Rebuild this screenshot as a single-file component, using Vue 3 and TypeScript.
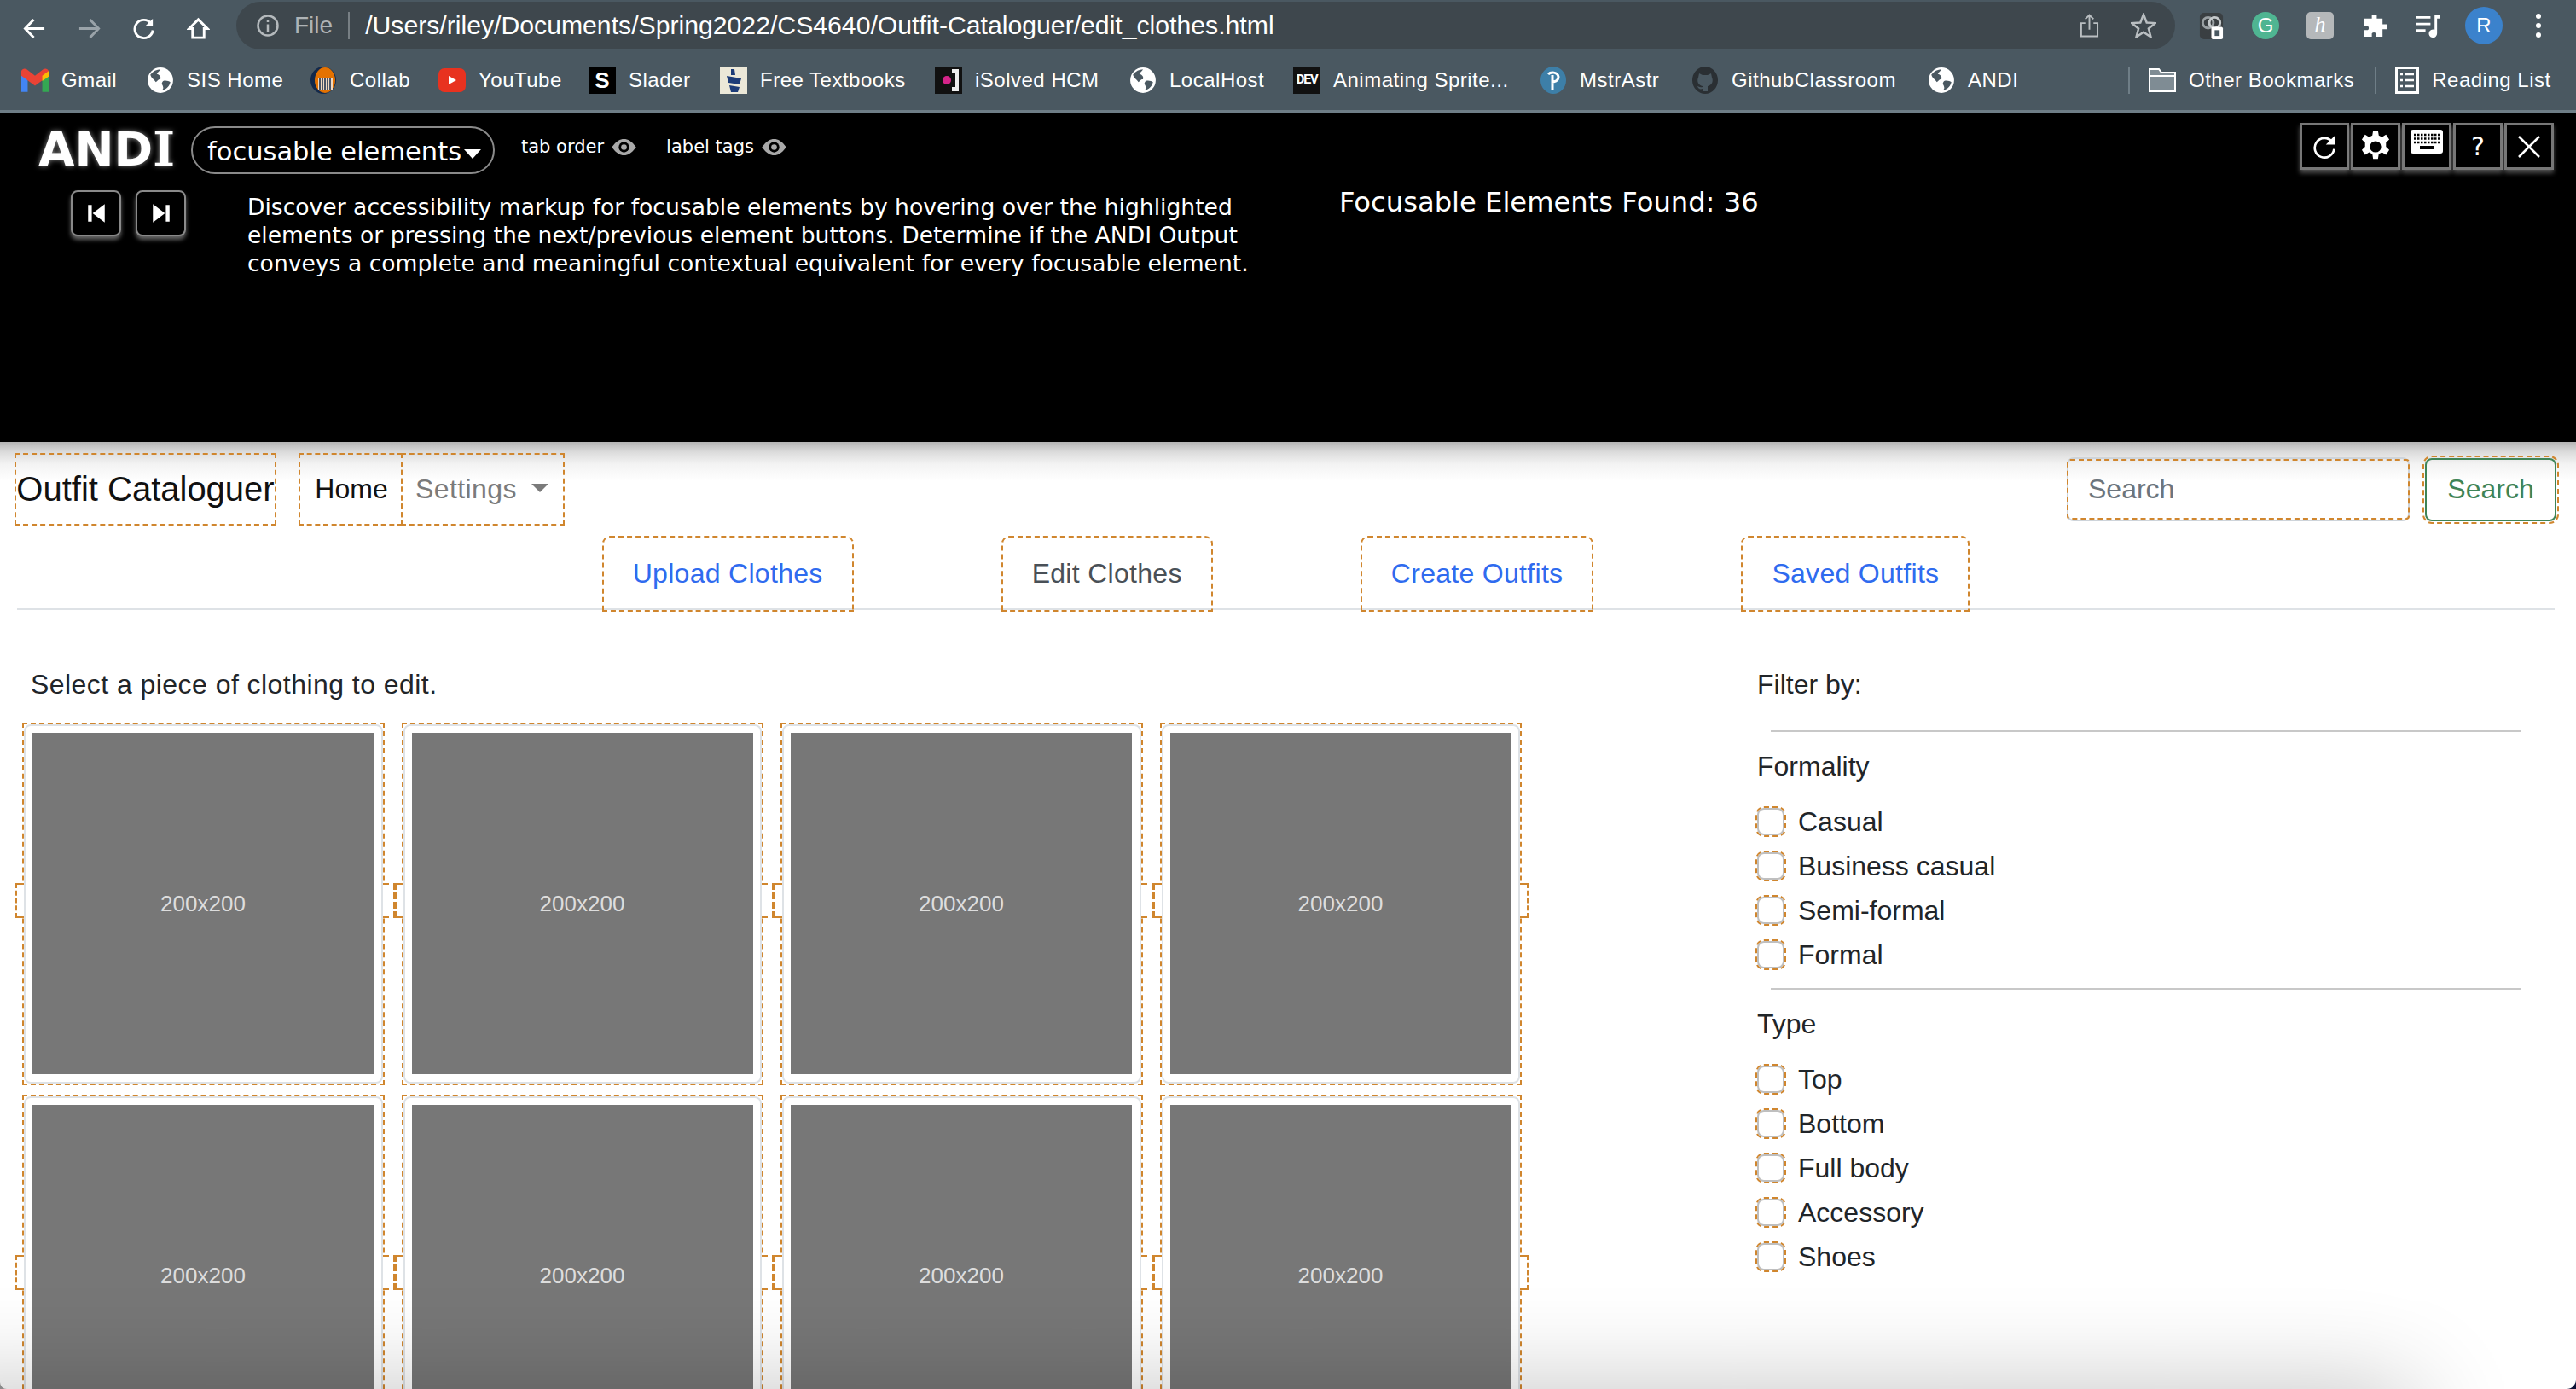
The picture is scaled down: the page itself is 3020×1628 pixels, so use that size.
<script setup lang="ts">
interface Bookmark {
  label: string
  icon: string
  left: number
}

const bookmarks: Bookmark[] = [
  { label: 'Gmail', icon: 'gmail', left: 25 },
  { label: 'SIS Home', icon: 'globe', left: 172 },
  { label: 'Collab', icon: 'collab', left: 363 },
  { label: 'YouTube', icon: 'youtube', left: 514 },
  { label: 'Slader', icon: 'slader', left: 690 },
  { label: 'Free Textbooks', icon: 'free', left: 844 },
  { label: 'iSolved HCM', icon: 'isolved', left: 1096 },
  { label: 'LocalHost', icon: 'globe', left: 1324 },
  { label: 'Animating Sprite...', icon: 'dev', left: 1516 },
  { label: 'MstrAstr', icon: 'pearson', left: 1805 },
  { label: 'GithubClassroom', icon: 'github', left: 1983 },
  { label: 'ANDI', icon: 'globe', left: 2260 },
]

// gap to the next bookmark, measured from the left edge of each icon
const bookmarkWidth = (i: number) =>
  i < bookmarks.length - 1 ? bookmarks[i + 1].left - bookmarks[i].left : 120

const tabs = [
  { label: 'Upload Clothes', active: false },
  { label: 'Edit Clothes', active: true },
  { label: 'Create Outfits', active: false },
  { label: 'Saved Outfits', active: false },
]

const cards = Array.from({ length: 8 }, (_, i) => i)

const filters = [
  { title: 'Formality', options: ['Casual', 'Business casual', 'Semi-formal', 'Formal'] },
  { title: 'Type', options: ['Top', 'Bottom', 'Full body', 'Accessory', 'Shoes'] },
]
</script>

<template>
  <div class="window">
    <header class="chrome">
      <div class="toolbar">
        <svg class="nav-icon" viewBox="0 0 28 28"><path d="M26 14H3M13 3 2.500 14 13 25" /></svg>
        <svg class="nav-icon dim" viewBox="0 0 28 28"><path d="M2 14h23M15 3l10.500 11L15 25" /></svg>
        <svg class="nav-icon" viewBox="0 0 28 28"><path d="M23 8a11 11 0 1 0 2 8" /><path class="fill" d="M25 2v9h-9z" /></svg>
        <svg class="nav-icon" viewBox="0 0 28 28"><path d="M14 3 3 14h4v11h14V14h4z" /></svg>
        <div class="omnibox">
          <svg class="info" viewBox="0 0 26 26"><circle cx="13" cy="13" r="11.500" /><path d="M13 11.500V20M13 6.500v2.500" /></svg>
          <span class="scheme">File</span>
          <span class="omni-sep"></span>
          <span class="url">/Users/riley/Documents/Spring2022/CS4640/Outfit-Cataloguer/edit_clothes.html</span>
          <span class="omni-end">
            <svg class="share" viewBox="0 0 24 30"><path d="M7 12H2v16h20V12h-5M12 20V2M7 7l5-5 5 5" /></svg>
            <svg class="star" viewBox="0 0 30 30"><path d="m15 2 3.700 9.500 10 .6-7.800 6.400 2.600 9.800L15 22.800l-8.500 5.500 2.600-9.800-7.800-6.400 10-.6z" /></svg>
          </span>
        </div>
        <div class="extensions">
          <svg class="ext" viewBox="0 0 28 32">
            <rect width="28" height="32" rx="5" fill="#3a3f42" />
            <circle cx="10" cy="12" r="6.500" fill="none" stroke="#9aa0a3" stroke-width="3" />
            <circle cx="18" cy="12" r="6.500" fill="none" stroke="#c4c8ca" stroke-width="3" />
            <rect x="14" y="17" width="14" height="15" rx="2" fill="#fff" />
            <rect x="18" y="21" width="6" height="7" fill="#4a5861" />
          </svg>
          <span class="ext-g">G</span>
          <span class="ext-h">h</span>
          <svg class="ext" viewBox="0 0 30 30"><path fill="#fff" d="M11 1h6v5h7v7h5v6h-5v9h-8v-4a3 3 0 0 0-5 0v4H2v-8h4a3 3 0 0 0 0-5H2V6h9z" /></svg>
          <svg class="ext" viewBox="0 0 30 30"><path fill="#fff" d="M0 3h18v3H0zM0 11h18v3H0zM0 19h12v3H0zM23 1h7v5h-4v18a5 5 0 1 1-3-4.500z" /></svg>
          <span class="avatar">R</span>
          <svg class="dots" viewBox="0 0 8 30"><circle cx="4" cy="4" r="3" /><circle cx="4" cy="15" r="3" /><circle cx="4" cy="26" r="3" /></svg>
        </div>
      </div>

      <div class="bookmarks">
        <div v-for="(b, i) in bookmarks" :key="b.label + i" class="bookmark" :style="{ width: bookmarkWidth(i) + 'px' }">
          <span class="fav">
            <svg v-if="b.icon === 'gmail'" viewBox="0 0 30 26">
              <path fill="#4285f4" d="M0 26V3l7 5v18z" />
              <path fill="#34a853" d="M23 26V8l7-5v23z" />
              <path fill="#ea4335" d="M0 3c1-3 4-3 6-2l9 7 9-7c2-1 5-1 6 2v5l-15 11L0 8z" />
              <path fill="#fbbc04" d="M23 8l7-5v6l-7 5z" />
            </svg>
            <svg v-else-if="b.icon === 'globe'" viewBox="0 0 30 30">
              <circle cx="15" cy="15" r="14" fill="#fff" />
              <path fill="#4a5861" d="M4 9c3-4 7-6 11-6-1 2-3 3-4 5 3 1 5 3 4 6-3 0-3 2-5 3-2-3-5-4-6-8zM18 16c3-1 6 0 8 1-1 4-4 8-9 9 2-2 1-4 0-6-1-1 0-3 1-4z" />
            </svg>
            <svg v-else-if="b.icon === 'collab'" viewBox="0 0 30 32">
              <ellipse cx="15" cy="16" rx="15" ry="16" fill="#13294b" />
              <ellipse cx="17" cy="16" rx="12" ry="15" fill="#e57200" />
              <rect x="9" y="14" width="17" height="13" fill="#f2d9c0" />
              <path stroke="#13294b" stroke-width="1.500" d="M11 14v13M14 14v13M17 14v13M20 14v13M23 14v13" />
            </svg>
            <svg v-else-if="b.icon === 'youtube'" viewBox="0 0 32 30">
              <rect y="1" width="32" height="28" rx="7" fill="#e8321f" />
              <path fill="#fff" d="m12 10 9 5-9 5z" />
            </svg>
            <span v-else-if="b.icon === 'slader'" class="fav-slader">S</span>
            <svg v-else-if="b.icon === 'free'" viewBox="0 0 32 32">
              <rect width="32" height="32" fill="#ece8d8" />
              <path fill="#1d3c78" d="M13 3h4l1 7h-5zM8 11l17 3-2 7-13-2zM11 22l12 2-2 6h-8z" />
            </svg>
            <svg v-else-if="b.icon === 'isolved'" viewBox="0 0 32 32">
              <rect width="32" height="32" fill="#111" />
              <rect x="20" y="3" width="8" height="26" fill="#eee" />
              <rect x="16" y="8" width="8" height="16" fill="#111" />
              <circle cx="14" cy="16" r="5" fill="#d6248a" />
            </svg>
            <span v-else-if="b.icon === 'dev'" class="fav-dev">DEV</span>
            <svg v-else-if="b.icon === 'pearson'" viewBox="0 0 30 32">
              <ellipse cx="15" cy="16" rx="15" ry="16" fill="#3d7fa8" />
              <path fill="none" stroke="#fff" stroke-width="3" d="M9 9c3-3 11-3 12 3 0 5-5 6-8 6M14 10v17" />
            </svg>
            <svg v-else-if="b.icon === 'github'" viewBox="0 0 30 32">
              <ellipse cx="15" cy="16" rx="15" ry="16" fill="#2a2f33" />
              <path fill="#4a5861" d="M8 8l4 2h6l4-2 1 5c2 4 0 9-5 10v6h-6v-3c-3 1-5 0-6-3 2 0 2 2 6 1v-1c-5-1-7-6-5-10z" />
            </svg>
          </span>
          <span class="bm-label">{{ b.label }}</span>
        </div>
        <span class="bm-sep first"></span>
        <div class="bm-right">
          <svg class="bm-folder" viewBox="0 0 32 28"><path fill="#7f8c94" stroke="#fff" stroke-width="2" d="M1 1h11l3 4h16v22H1z" /><path fill="none" stroke="#fff" stroke-width="2" d="M1 9h30" /></svg>
          <span class="bm-label">Other Bookmarks</span>
        </div>
        <span class="bm-sep"></span>
        <div class="bm-right">
          <svg class="bm-reading" viewBox="0 0 28 32"><rect x="1.500" y="1.500" width="25" height="29" fill="none" stroke="#fff" stroke-width="3" /><path stroke="#fff" stroke-width="2.500" d="M6 9h3M12 9h10M6 16h3M12 16h10M6 23h3M12 23h10" /></svg>
          <span class="bm-label">Reading List</span>
        </div>
      </div>
    </header>

    <section class="andi">
      <div class="andi-main">
        <div class="andi-head">
          <span class="andi-logo">AND<span class="serif-i">I</span></span>
          <span class="andi-mode">focusable elements<span class="caret"></span></span>
          <span class="andi-toggle">tab order<svg class="eye" viewBox="0 0 30 20"><path fill="#a9a9a9" d="M0 10C6 2 10 0 15 0s9 2 15 10c-6 8-10 10-15 10S6 18 0 10z" /><circle cx="15" cy="10" r="6.500" fill="#000" /><circle cx="15" cy="10" r="3.500" fill="#a9a9a9" /></svg></span>
          <span class="andi-toggle">label tags<svg class="eye" viewBox="0 0 30 20"><path fill="#a9a9a9" d="M0 10C6 2 10 0 15 0s9 2 15 10c-6 8-10 10-15 10S6 18 0 10z" /><circle cx="15" cy="10" r="6.500" fill="#000" /><circle cx="15" cy="10" r="3.500" fill="#a9a9a9" /></svg></span>
        </div>
        <div class="andi-body">
          <div class="andi-nav">
            <button class="andi-step">
              <svg viewBox="0 0 24 24"><path d="M3 3h4v18H3zM21 2v20L8 12z" /></svg>
            </button>
            <button class="andi-step">
              <svg viewBox="0 0 24 24"><path d="M21 3h-4v18h4zM3 2v20l13-10z" /></svg>
            </button>
          </div>
          <p class="andi-desc">
            Discover accessibility markup for focusable elements by hovering over the highlighted<br />
            elements or pressing the next/previous element buttons. Determine if the ANDI Output<br />
            conveys a complete and meaningful contextual equivalent for every focusable element.
          </p>
        </div>
      </div>
      <p class="andi-count">Focusable Elements Found: 36</p>
      <div class="andi-tools">
        <button class="tool">
          <svg class="reload" viewBox="0 0 32 32"><path fill="none" stroke="#fff" stroke-width="3" d="M26 9a13 13 0 1 0 3 10" /><path fill="#fff" d="M30 1v12H18z" /></svg>
        </button>
        <button class="tool">
          <svg class="gear" viewBox="0 0 36 40"><path fill="#fff" fill-rule="evenodd" d="M15 0h6l1 6 4 2 5-3 4 6-4 4v5l4 4-4 6-5-3-4 2-1 6h-6l-1-6-4-2-5 3-4-6 4-4v-5L1 11l4-6 5 3 4-2zm3 13a7 7 0 1 0 0 14 7 7 0 0 0 0-14z" /></svg>
        </button>
        <button class="tool">
          <svg class="kbd" viewBox="0 0 38 28"><rect width="38" height="28" rx="3" fill="#fff" /><path stroke="#000" stroke-width="2.500" stroke-dasharray="2.500 1.500" d="M4 6h30M4 10.500h30M4 15h30" /><rect x="11" y="19" width="16" height="4" fill="#000" /></svg>
        </button>
        <button class="tool tool-text">?</button>
        <button class="tool">
          <svg class="close" viewBox="0 0 26 26"><path fill="none" stroke="#fff" stroke-width="2.500" d="m1 1 24 24M25 1 1 25" /></svg>
        </button>
      </div>
    </section>

    <main class="page">
      <nav class="navbar">
        <a class="brand focusable">Outfit Cataloguer</a>
        <div class="nav-links">
          <a class="home focusable">Home</a>
          <a class="settings focusable">Settings<span class="nav-caret"></span></a>
        </div>
        <form class="search" @submit.prevent>
          <span class="search-field"><input class="search-input" placeholder="Search" /></span>
          <button class="search-btn">Search</button>
        </form>
      </nav>

      <ul class="tabs">
        <li v-for="t in tabs" :key="t.label" class="tab" :class="{ active: t.active }">{{ t.label }}</li>
      </ul>

      <div class="content">
        <div class="gallery">
          <p class="lead">Select a piece of clothing to edit.</p>
          <div class="grid">
            <a v-for="c in cards" :key="c" class="card-wrap">
              <span class="nub nub-l"></span>
              <span class="nub nub-r"></span>
              <span class="card">
                <span class="thumb">200x200</span>
              </span>
            </a>
          </div>
        </div>

        <aside class="filters">
          <p class="filter-title">Filter by:</p>
          <div v-for="f in filters" :key="f.title" class="filter-group">
            <hr class="rule" />
            <h3>{{ f.title }}</h3>
            <label v-for="o in f.options" :key="o" class="check">
              <span class="box"></span>{{ o }}
            </label>
          </div>
        </aside>
      </div>
      <div class="bottom-shade"></div>
    </main>
  </div>
</template>

<style>
html, body { margin: 0; background: #fff; overflow: hidden; }
</style>

<style scoped>
* { box-sizing: border-box; }
.window { width: 3020px; height: 1628px; overflow: hidden; display: flex; flex-direction: column; font-family: "Liberation Sans", Arial, sans-serif; color: #212529; background: linear-gradient(90deg, #8a8a8a 50%, #0b1136 50%); }

.chrome { background: #4a5861; height: 132px; border-bottom: 3px solid #6f7e87; flex: none; }
.toolbar { height: 66px; display: flex; align-items: center; padding-left: 27px; }
.nav-icon { width: 27px; height: 27px; margin-right: 37px; fill: none; stroke: #fff; stroke-width: 3; }
.nav-icon .fill { fill: #fff; stroke: none; }
.nav-icon.dim { stroke: #9aa3a9; }
.omnibox { margin-left: -6px; width: 2273px; height: 56px; margin-top: -6px; border-radius: 28px; background: #3e474d; display: flex; align-items: center; padding-left: 24px; }
.info { width: 26px; height: 26px; fill: none; stroke: #b4b9bc; stroke-width: 2.500; }
.scheme { margin-left: 18px; font-size: 28px; color: #aeb3b6; }
.omni-sep { width: 2px; height: 32px; background: #777f84; margin: 0 18px; }
.url { font-size: 30.200px; color: #fff; white-space: nowrap; }
.omni-end { margin-left: auto; display: flex; align-items: center; gap: 37px; padding-right: 22px; }
.share { width: 23px; height: 30px; fill: none; stroke: #b9bec1; stroke-width: 2; }
.star { width: 30px; height: 30px; fill: none; stroke: #b9bec1; stroke-width: 2.500; }
.extensions { display: flex; align-items: center; margin-left: 28px; margin-top: -6px; }
.ext { width: 29px; height: 31px; margin-right: 33px; }
.ext-g { width: 32px; height: 32px; border-radius: 50%; background: #4fb592; color: #fff; font-size: 24px; line-height: 32px; text-align: center; margin-right: 32px; }
.ext-h { width: 32px; height: 32px; border-radius: 5px; background: #b5b8ba; color: #fff; font: italic 26px/30px "Liberation Serif", serif; text-align: center; margin-right: 34px; }
.avatar { width: 44px; height: 44px; border-radius: 50%; background: #3b82cc; color: #fff; font-size: 24px; line-height: 44px; text-align: center; margin-left: -4px; }
.dots { width: 8px; height: 30px; margin-left: 38px; fill: #fff; }

.bookmarks { height: 56px; display: flex; align-items: center; padding-left: 25px; }
.bookmark { display: flex; align-items: center; flex: none; }
.fav { width: 32px; height: 32px; flex: none; display: flex; align-items: center; justify-content: center; }
.fav svg { width: 100%; height: 100%; display: block; }
.fav-slader { width: 32px; height: 32px; background: #000; color: #fff; font: bold 26px/32px "Liberation Sans", sans-serif; text-align: center; }
.fav-dev { width: 32px; height: 32px; background: #111; color: #fff; font: bold 16px/32px "Liberation Mono", monospace; text-align: center; letter-spacing: -1.500px; }
.bm-label { font-size: 24px; letter-spacing: .5px; color: #fff; margin-left: 15px; white-space: nowrap; }
.bm-sep { width: 2px; height: 32px; background: #6f7e87; flex: none; margin-left: 24px; }
.bm-sep.first { margin-left: 115px; }
.bm-right { display: flex; align-items: center; margin-left: 22px; flex: none; }
.bm-folder { width: 32px; height: 28px; }
.bm-reading { width: 28px; height: 32px; }

.andi { height: 386px; flex: none; background: #000; color: #fff; display: flex; align-items: flex-start; font-family: "DejaVu Sans", Verdana, sans-serif; }
.andi-main { width: 1570px; flex: none; }
.andi-head { display: flex; align-items: flex-start; padding: 16px 0 0 45px; }
.andi-logo { font-weight: 700; font-size: 55px; line-height: 48px; margin-top: 3px; text-shadow: 0 0 6px rgba(255,255,255,.55); width: 179px; flex: none; white-space: nowrap; }
.serif-i { font-family: "DejaVu Serif", serif; }
.andi-mode { width: 356px; height: 56px; flex: none; border: 2px solid #8a8a8a; border-radius: 28px; padding: 3px 0 0 17px; font-size: 30.500px; line-height: 50px; display: flex; align-items: center; white-space: nowrap; }
.caret { width: 0; height: 0; border: 10px solid transparent; border-top: 11px solid #fff; border-bottom: 0; margin: 6px 0 0 3px; }
.andi-toggle { display: flex; align-items: center; font-size: 21px; line-height: 32px; margin-left: 31px; white-space: nowrap; padding-top: 8px; }
.andi-toggle + .andi-toggle { margin-left: 35px; }
.eye { width: 29px; height: 19px; margin-left: 9px; flex: none; }
.andi-body { display: flex; align-items: flex-start; padding: 19px 0 0 83px; }
.andi-nav { display: flex; gap: 17px; flex: none; width: 207px; }
.andi-step { width: 59px; height: 54px; padding: 0; background: #000; border: 2px solid #8a8a8a; border-radius: 8px; box-shadow: 0 4px 5px rgba(255,255,255,.4); display: flex; align-items: center; justify-content: center; }
.andi-step svg { width: 26px; height: 26px; fill: #fff; }
.andi-desc { margin: 3px 0 0; font-size: 26.600px; line-height: 33px; white-space: nowrap; }
.andi-count { margin: 86px 0 0; font-size: 32.200px; line-height: 38px; white-space: nowrap; }
.andi-tools { margin-left: auto; margin-right: 26px; display: flex; gap: 2px; margin-top: 12px; }
.tool { width: 58px; height: 55px; padding: 0; background: #000; border: 3px solid #777; box-shadow: 0 4px 5px rgba(255,255,255,.3); display: flex; align-items: center; justify-content: center; color: #fff; }
.tool svg.reload { width: 28px; height: 28px; }
.tool svg.gear { width: 34px; height: 38px; }
.tool svg.close { width: 26px; height: 26px; }
.tool svg.kbd { width: 38px; height: 28px; margin-top: -12px; }
.tool-text { font: 30px "DejaVu Sans", sans-serif; }

.page { flex: 1; position: relative; overflow: hidden; border-radius: 0 0 11px 8px; background: linear-gradient(#b4b4b4, #dcdcdc 12px, #f3f3f3 26px, #fff 46px); font-size: 32px; }
.focusable { outline: 2px dashed #d0862e; outline-offset: -1px; }
.navbar { display: flex; align-items: center; height: 97px; padding: 14px 23px 0 18px; }
.brand { width: 305px; height: 83px; font-size: 40px; line-height: 83px; white-space: nowrap; text-align: center; color: #111; flex: none; }
.nav-links { display: flex; margin-left: 28px; flex: none; }
.home { width: 120px; height: 83px; line-height: 83px; padding-left: 2px; text-align: center; color: #111; }
.settings { width: 190px; height: 83px; line-height: 83px; padding-left: 16px; color: #7b7b7b; letter-spacing: .4px; display: flex; align-items: center; }
.nav-caret { width: 0; height: 0; border: 10px solid transparent; border-top: 10px solid #7b7b7b; border-bottom: 0; margin: 0 0 4px 17px; }
.search { margin-left: auto; display: flex; align-items: center; gap: 18px; }
.search-field { position: relative; display: block; width: 402px; height: 75px; }
.search-field::after { content: ""; position: absolute; inset: 2px 0; border: 2px dashed #d0862e; border-radius: 4px; pointer-events: none; }
.search-input { display: block; width: 100%; height: 100%; border: 2px solid #ced4da; border-radius: 8px; outline: 0; padding: 0 23px; font: 32px "Liberation Sans", sans-serif; background: transparent; }
.search-input::placeholder { color: #6c757d; opacity: 1; }
.search-btn { width: 154px; height: 74px; border: 2px solid #3f8457; border-radius: 8px; outline: 2px dashed #d0862e; outline-offset: 1px; background: transparent; color: #3f8457; font: 32px "Liberation Sans", sans-serif; padding: 0; }

.tabs { list-style: none; margin: 14px 25px 0 20px; padding: 0; display: flex; justify-content: center; gap: 175px; border-bottom: 2px solid #dee2e6; height: 86px; }
.tab { height: 87px; padding: 0 35px; line-height: 87px; letter-spacing: .3px; color: #2f6bef; border-radius: 8px 8px 0 0; outline: 2px dashed #d0862e; outline-offset: -1px; white-space: nowrap; background: transparent; }
.tab.active { color: #495057; }

.content { display: flex; }
.gallery { width: 2040px; flex: none; }
.lead { margin: 62px 0 0 36px; line-height: 50px; letter-spacing: .45px; }
.grid { display: grid; grid-template-columns: repeat(4, 422.500px); column-gap: 22px; row-gap: 13.500px; margin: 21px 0 0 27px; }
.card-wrap { position: relative; height: 422.500px; outline: 2px dashed #d0862e; outline-offset: -1px; display: block; }
.nub { position: absolute; top: 187px; height: 41px; background: #fff; border: 2px dashed #d0862e; z-index: 1; }
.nub-l { left: -11px; width: 12px; border-right: 0; border-left-width: 4px; }
.nub-r { right: -6px; width: 7px; border-left: 0; border-right: 0; }
.card-wrap:nth-child(4n + 1) .nub-l { left: -9px; width: 10px; border-left-width: 2px; }
.card-wrap:nth-child(4n) .nub-r { right: -9px; width: 10px; border-right: 2px dashed #d0862e; }
.card { position: absolute; inset: 1px; border: 2px solid #dee2e6; border-radius: 8px; background: #fff; display: block; padding: 8px; z-index: 2; }
.thumb { display: flex; width: 400px; height: 400px; background: #777; color: #ddd; font-size: 26px; align-items: center; justify-content: center; }

.filters { width: 940px; padding: 62px 0 0 20px; }
.filter-title { margin: 0; line-height: 50px; }
.filter-group { margin-top: 29px; }
.filter-group + .filter-group { margin-top: 13px; }
.rule { margin: 0 0 0 16px; width: 880px; height: 2px; border: 0; background: #c8c8c8; }
.filter-group h3 { margin: 0; font: inherit; padding-top: 16px; line-height: 48px; height: 79px; }
.check { display: flex; align-items: center; height: 52px; }
.box { width: 32px; height: 32px; margin-right: 16px; border: 2px solid #bfbfbf; border-radius: 8px; outline: 2px dashed #d0862e; outline-offset: 0; flex: none; }

.bottom-shade { position: absolute; left: -200px; right: 190px; bottom: -200px; height: 200px; box-shadow: 0 0 120px rgba(0,0,0,.24); pointer-events: none; z-index: 5; }
</style>
